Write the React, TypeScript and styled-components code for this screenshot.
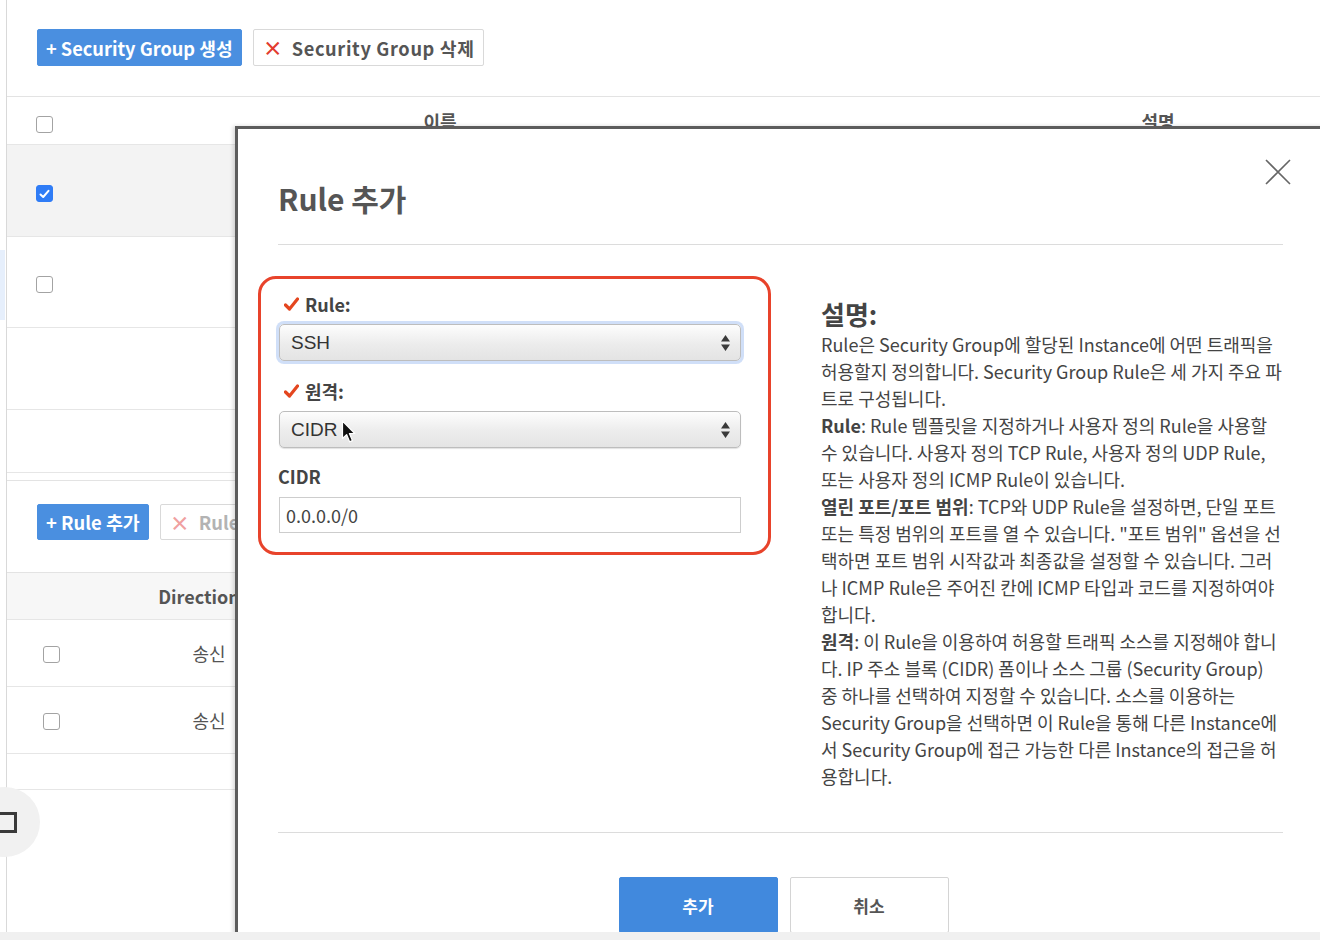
import styled, { createGlobalStyle } from 'styled-components';

const GlobalStyle = createGlobalStyle`
  html, body {
    margin: 0;
    padding: 0;
    background: #fff;
  }
  body {
    font-family: "Noto Sans CJK KR", "Noto Sans", sans-serif;
    color: #444;
  }
  * {
    box-sizing: border-box;
  }
`;

const Screen = styled.div`
  position: relative;
  width: 1320px;
  height: 940px;
  overflow: hidden;
  background: #fff;
`;

const Page = styled.div`
  width: 1600px;
  height: 932px;
  margin-left: 6px;
  border-left: 1px solid #d9d9d9;
`;

const BottomBand = styled.div`
  position: relative;
  z-index: 3;
  height: 8px;
  background: #f0f0f0;
`;

const Toolbar = styled.div<{ $height: number; $top: number }>`
  display: flex;
  align-items: flex-start;
  gap: 11px;
  height: ${p => p.$height}px;
  padding: ${p => p.$top}px 0 0 30px;
  border-bottom: 1px solid #e3e3e3;
`;

const Button = styled.div<{ $primary?: boolean; $muted?: boolean; $h?: number; $size?: number; $spacing?: number }>`
  display: flex;
  align-items: center;
  gap: 6px;
  height: ${p => p.$h ?? 37}px;
  padding: 0 8px;
  border: 1px solid ${p => (p.$primary ? '#4a8fe0' : '#d9d9d9')};
  border-radius: 2px;
  background: ${p => (p.$primary ? '#4a8fe0' : '#fff')};
  color: ${p => (p.$primary ? '#fff' : p.$muted ? '#b3b3b3' : '#555')};
  font-size: ${p => p.$size ?? 18}px;
  letter-spacing: ${p => p.$spacing ?? 0}px;
  font-weight: 700;
  white-space: nowrap;
`;

const Cross = styled.span<{ $muted?: boolean }>`
  color: ${p => (p.$muted ? '#f0a0a0' : '#e23b2e')};
  font-size: 20px;
  font-weight: 700;
  letter-spacing: 0;
  margin: 0 3px 0 1px;
`;

const Row = styled.div<{ $h: number; $cols: string; $bg?: string }>`
  display: grid;
  grid-template-columns: ${p => p.$cols};
  align-items: center;
  height: ${p => p.$h}px;
  background: ${p => p.$bg ?? '#fff'};
  border-bottom: 1px solid #e6e6e6;
`;

const Spacer = styled.div`
  height: 8px;
  border-bottom: 1px solid #e3e3e3;
`;

const CheckCell = styled.div<{ $pad: number; $shift: number }>`
  display: flex;
  align-items: center;
  padding-left: ${p => p.$pad}px;
  padding-top: ${p => p.$shift}px;
`;

const HeadCell = styled.div`
  text-align: center;
  font-size: 18px;
  font-weight: 700;
  color: #555;
`;

const Cell = styled.div`
  padding-left: 20px;
  text-align: center;
  font-size: 18px;
  color: #555;
`;

const Check = styled.span<{ $checked?: boolean }>`
  display: flex;
  align-items: center;
  justify-content: center;
  width: 17px;
  height: 17px;
  border-radius: 3px;
  border: 1px solid ${p => (p.$checked ? '#2f7cf6' : '#a3a3a3')};
  background: ${p => (p.$checked ? '#2f7cf6' : '#fff')};
`;

const EdgeStripe = styled.div`
  position: absolute;
  left: 0;
  top: 250px;
  width: 5px;
  height: 70px;
  background: #e6effc;
`;

const FloatButton = styled.div`
  position: absolute;
  left: -30px;
  top: 787px;
  width: 70px;
  height: 70px;
  border-radius: 50%;
  background: #f1f1f1;
`;

const FloatIcon = styled.span`
  position: absolute;
  left: 27px;
  top: 25px;
  width: 20px;
  height: 21px;
  border: 3px solid #3a3a3a;
`;

/* modal */

const Modal = styled.div`
  position: absolute;
  z-index: 2;
  left: 235px;
  top: 126px;
  width: 1125px;
  height: 814px;
  background: #fff;
  border-top: 3px solid #5c5c5c;
  border-left: 3px solid #5c5c5c;
  box-shadow: -2px 0 4px rgba(0, 0, 0, 0.15);
  padding: 0 77px 0 40px;
`;

const CloseButton = styled.div`
  position: absolute;
  left: 1027px;
  top: 30px;
  width: 26px;
  height: 26px;
`;

const Title = styled.h2`
  margin: 0;
  padding-top: 51px;
  padding-bottom: 28px;
  border-bottom: 1px solid #dcdcdc;
  font-size: 30px;
  line-height: 36px;
  font-weight: 700;
  color: #555;
`;

const Body = styled.div`
  display: grid;
  grid-template-columns: 493px 462px;
  column-gap: 50px;
  align-items: start;
  padding-bottom: 42px;
  border-bottom: 1px solid #dcdcdc;
`;

const Highlight = styled.div`
  display: flex;
  flex-direction: column;
  margin: 31px 0 0 -20px;
  padding: 13px 27px 19px 17px;
  border: 3px solid #e8432b;
  border-radius: 18px;
`;

const Label = styled.div<{ $gap: number; $indent?: number }>`
  display: flex;
  align-items: center;
  gap: 6px;
  height: 24px;
  margin-bottom: ${p => p.$gap}px;
  padding-left: ${p => p.$indent ?? 0}px;
  font-size: 18px;
  font-weight: 700;
  color: #444;
`;

const SelectBox = styled.div<{ $focus?: boolean; $gap: number }>`
  position: relative;
  display: flex;
  align-items: center;
  justify-content: space-between;
  height: 37px;
  margin-left: 1px;
  margin-bottom: ${p => p.$gap}px;
  padding: 0 10px 0 11px;
  border: 1px solid #bdbdbd;
  border-radius: 5px;
  background: linear-gradient(#fdfdfd, #ececec 55%, #e4e4e4);
  box-shadow: ${p =>
    p.$focus
      ? '0 0 0 3px rgba(150, 185, 240, 0.45)'
      : '0 1px 1px rgba(0, 0, 0, 0.12)'};
  font-family: "Liberation Sans", Arial, sans-serif;
  font-size: 19px;
  color: #333;
`;

const Cursor = styled.svg`
  position: absolute;
  left: 61px;
  top: 8px;
`;

const Input = styled.div`
  display: flex;
  align-items: center;
  height: 36px;
  margin-left: 1px;
  padding-left: 6px;
  border: 1px solid #cdcdcd;
  font-size: 18px;
  color: #444;
`;

const Help = styled.div`
  padding-top: 52px;
  color: #444;
`;

const HelpTitle = styled.h3`
  margin: 0;
  font-size: 26px;
  line-height: 34px;
  font-weight: 700;
  color: #444;
`;

const HelpText = styled.p`
  margin: 0;
  font-size: 18px;
  line-height: 27px;
`;

const Footer = styled.div`
  display: flex;
  justify-content: center;
  gap: 12px;
  padding-top: 44px;
  padding-left: 6px;
`;

const FooterButton = styled.div<{ $primary?: boolean }>`
  display: flex;
  align-items: center;
  justify-content: center;
  width: 159px;
  height: 56px;
  border: 1px solid ${p => (p.$primary ? '#4189dd' : '#d4d4d4')};
  border-radius: 2px;
  background: ${p => (p.$primary ? '#4189dd' : '#fff')};
  color: ${p => (p.$primary ? '#fff' : '#555')};
  font-size: 17px;
  font-weight: 700;
`;

const CheckMark = () => (
  <svg width="15" height="14" viewBox="0 0 15 14">
    <path d="M1.5 8 L5.5 12 L13.5 2" fill="none" stroke="#e4461f" strokeWidth="3.2" strokeLinecap="round" strokeLinejoin="round" />
  </svg>
);

const Arrows = () => (
  <svg width="9" height="16" viewBox="0 0 9 16">
    <path d="M4.5 0 L9 6.5 L0 6.5 Z M0 9.5 L9 9.5 L4.5 16 Z" fill="#3a3a3a" />
  </svg>
);

const Box = ({ checked }: { checked?: boolean }) => (
  <Check $checked={checked}>
    {checked && (
      <svg width="11" height="10" viewBox="0 0 11 10">
        <path d="M1.5 5.5 L4.2 8 L9.5 1.8" fill="none" stroke="#fff" strokeWidth="2" strokeLinecap="round" strokeLinejoin="round" />
      </svg>
    )}
  </Check>
);

const sgCols = '74px 718px 718px';
const ruleCols = '86px 212px 1fr';

export default function App() {
  return (
    <Screen>
      <GlobalStyle />
      <Page>
        <Toolbar $height={97} $top={29}>
          <Button $primary $size={18.2}>+ Security Group 생성</Button>
          <Button $size={18.2} $spacing={0.65}>
            <Cross>×</Cross>Security Group 삭제
          </Button>
        </Toolbar>

        <Row $h={48} $cols={sgCols}>
          <CheckCell $pad={29} $shift={7}><Box /></CheckCell>
          <HeadCell>이름</HeadCell>
          <HeadCell>설명</HeadCell>
        </Row>
        <Row $h={92} $cols={sgCols} $bg="#f3f3f3">
          <CheckCell $pad={29} $shift={6}><Box checked /></CheckCell>
        </Row>
        <Row $h={91} $cols={sgCols}>
          <CheckCell $pad={29} $shift={5}><Box /></CheckCell>
        </Row>
        <Row $h={82} $cols={sgCols} />
        <Row $h={63} $cols={sgCols} />
        <Spacer />

        <Toolbar $height={92} $top={23}>
          <Button $primary $h={36} $size={18.4}>+ Rule 추가</Button>
          <Button $muted $h={36} $size={18.4}>
            <Cross $muted>×</Cross>Rule 삭제
          </Button>
        </Toolbar>

        <Row $h={47} $cols={ruleCols} $bg="#f7f7f7">
          <div />
          <HeadCell>Direction</HeadCell>
        </Row>
        <Row $h={67} $cols={ruleCols}>
          <CheckCell $pad={36} $shift={3}><Box /></CheckCell>
          <Cell>송신</Cell>
        </Row>
        <Row $h={67} $cols={ruleCols}>
          <CheckCell $pad={36} $shift={3}><Box /></CheckCell>
          <Cell>송신</Cell>
        </Row>
        <Row $h={36} $cols={ruleCols} />
      </Page>
      <BottomBand />

      <EdgeStripe />
      <FloatButton>
        <FloatIcon />
      </FloatButton>

      <Modal>
        <CloseButton>
          <svg width="26" height="26" viewBox="0 0 26 26">
            <path d="M1 1 L25 25 M25 1 L1 25" stroke="#666" strokeWidth="1.6" />
          </svg>
        </CloseButton>
        <Title>Rule 추가</Title>

        <Body>
          <Highlight>
            <Label $gap={8} $indent={6}>
              <CheckMark />
              Rule:
            </Label>
            <SelectBox $focus $gap={18}>
              SSH
              <Arrows />
            </SelectBox>
            <Label $gap={8} $indent={6}>
              <CheckMark />
              원격:
            </Label>
            <SelectBox $gap={16}>
              CIDR
              <Arrows />
              <Cursor width="15" height="24" viewBox="0 0 15 24">
                <path
                  d="M1.5 1 L1.5 18.5 L5.6 14.6 L8.6 21.8 L11.4 20.6 L8.4 13.5 L13.8 13.5 Z"
                  fill="#111"
                  stroke="#fff"
                  strokeWidth="1.2"
                  strokeLinejoin="round"
                />
              </Cursor>
            </SelectBox>
            <Label $gap={9}>CIDR</Label>
            <Input>0.0.0.0/0</Input>
          </Highlight>

          <Help>
            <HelpTitle>설명:</HelpTitle>
            <HelpText>
              Rule은 Security Group에 할당된 Instance에 어떤 트래픽을 허용할지 정의합니다. Security Group Rule은 세 가지 주요 파트로 구성됩니다.
            </HelpText>
            <HelpText>
              <b>Rule</b>: Rule 템플릿을 지정하거나 사용자 정의 Rule을 사용할 수 있습니다. 사용자 정의 TCP Rule, 사용자 정의 UDP Rule, 또는 사용자 정의 ICMP Rule이 있습니다.
            </HelpText>
            <HelpText>
              <b>열린 포트/포트 범위</b>: TCP와 UDP Rule을 설정하면, 단일 포트 또는 특정 범위의 포트를 열 수 있습니다. "포트 범위" 옵션을 선택하면 포트 범위 시작값과 최종값을 설정할 수 있습니다. 그러나 ICMP Rule은 주어진 칸에 ICMP 타입과 코드를 지정하여야 합니다.
            </HelpText>
            <HelpText>
              <b>원격</b>: 이 Rule을 이용하여 허용할 트래픽 소스를 지정해야 합니다. IP 주소 블록 (CIDR) 폼이나 소스 그룹 (Security Group) 중 하나를 선택하여 지정할 수 있습니다. 소스를 이용하는 Security Group을 선택하면 이 Rule을 통해 다른 Instance에서 Security Group에 접근 가능한 다른 Instance의 접근을 허용합니다.
            </HelpText>
          </Help>
        </Body>

        <Footer>
          <FooterButton $primary>추가</FooterButton>
          <FooterButton>취소</FooterButton>
        </Footer>
      </Modal>
    </Screen>
  );
}
